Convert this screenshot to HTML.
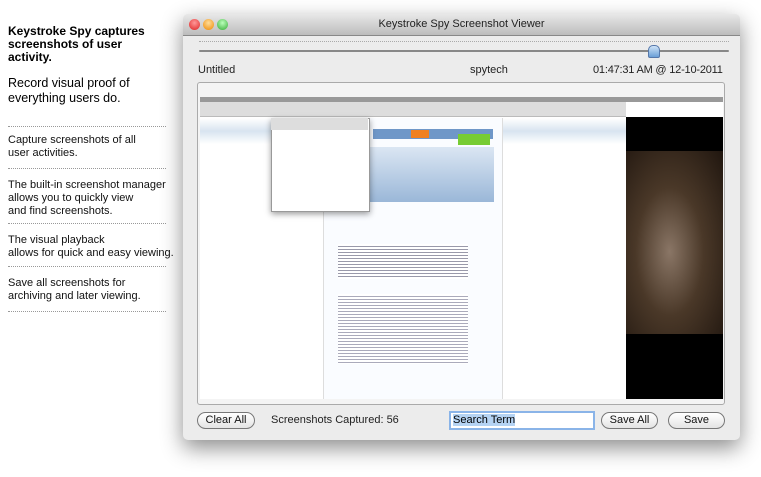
<!DOCTYPE html>
<html><head><meta charset="utf-8"><style>
body{margin:0;width:761px;height:477px;background:#fff;position:relative;overflow:hidden;font-family:"Liberation Sans",sans-serif;}
.a{position:absolute;}
.lt{font-size:11px;color:#111;line-height:13px;left:8px;}
.dot{position:absolute;left:8px;width:158px;border-top:1px dotted #999;}
.win{left:183px;top:14px;width:557px;height:426px;background:#ececec;border-radius:5px;box-shadow:0 8px 22px rgba(0,0,0,.45);overflow:hidden;}
.tb{left:0;top:0;width:557px;height:21px;background:linear-gradient(#e8e8e8,#bcbcbc);border-bottom:1px solid #888;text-align:center;font-size:11px;line-height:21px;color:#222;}
.light{position:absolute;top:5px;width:11px;height:11px;border-radius:50%;}
.btn{position:absolute;top:398px;height:15px;border:1px solid #777;border-radius:9px;background:linear-gradient(#fff,#e4e4e4);font-size:11px;line-height:15px;text-align:center;color:#111;}
</style></head><body>
<div class="a" style="left:8px;top:25px;font-size:12px;font-weight:bold;line-height:13px;color:#000">Keystroke Spy captures<br>screenshots of user<br>activity.</div>
<div class="a" style="left:8px;top:76px;font-size:12.5px;line-height:15px;color:#000">Record visual proof of<br>everything users do.</div>
<div class="dot" style="top:126px"></div>
<div class="a lt" style="top:134px">Capture screenshots of all<br>user activities.</div>
<div class="dot" style="top:168px"></div>
<div class="a lt" style="top:179px">The built-in screenshot manager<br>allows you to quickly view<br>and find screenshots.</div>
<div class="dot" style="top:223px"></div>
<div class="a lt" style="top:234px">The visual playback<br>allows for quick and easy viewing.</div>
<div class="dot" style="top:266px"></div>
<div class="a lt" style="top:277px">Save all screenshots for<br>archiving and later viewing.</div>
<div class="dot" style="top:311px"></div>

<div class="a win">
 <div class="a tb">Keystroke Spy Screenshot Viewer</div>
 <div class="light" style="left:6px;background:radial-gradient(circle at 50% 35%,#f99,#d22)"></div>
 <div class="light" style="left:20px;background:radial-gradient(circle at 50% 35%,#fd9,#e80)"></div>
 <div class="light" style="left:34px;background:radial-gradient(circle at 50% 35%,#bfb,#3a3)"></div>
 <div class="a" style="left:16px;top:27px;width:530px;border-top:1px dotted #aaa"></div>
 <div class="a" style="left:16px;top:36px;width:530px;height:2px;background:#888;border-radius:1px"></div>
 <div class="a" style="left:465px;top:31px;width:10px;height:11px;background:linear-gradient(#cfe3f7,#6a9fd6);border:1px solid #5577aa;border-radius:5px 5px 2px 2px"></div>
 <div class="a" style="left:15px;top:50px;font-size:11px;color:#222">Untitled</div>
 <div class="a" style="left:287px;top:50px;font-size:11px;color:#222">spytech</div>
 <div class="a" style="left:410px;top:50px;font-size:11px;color:#222;letter-spacing:-0.2px">01:47:31 AM @ 12-10-2011</div>
 <div class="a" style="left:14px;top:68px;width:526px;height:321px;background:#f4f4f4;border:1px solid #aaa;border-radius:3px"></div>
 <div class="a" style="left:17px;top:83px;width:523px;height:302px;background:#fff"></div>
 <div class="a" style="left:17px;top:83px;width:523px;height:5px;background:#999"></div>
 <div class="a" style="left:17px;top:88px;width:426px;height:14px;background:#ddd;border-bottom:1px solid #bbb"></div>
 <div class="a" style="left:17px;top:104px;width:426px;height:26px;background:linear-gradient(#fff,#d8e4f0,#fff)"></div>
 <div class="a" style="left:443px;top:103px;width:97px;height:282px;background:#000"></div>
 <div class="a" style="left:443px;top:137px;width:97px;height:183px;background:radial-gradient(ellipse at 45% 55%,#8a7666,#4a3828 45%,#20160f)"></div>
 <div class="a" style="left:140px;top:104px;width:178px;height:281px;background:#fafcff;border-left:1px solid #ddd;border-right:1px solid #ddd"></div>
 <div class="a" style="left:190px;top:115px;width:120px;height:10px;background:#6f97c8"></div>
 <div class="a" style="left:228px;top:116px;width:18px;height:8px;background:#f08020"></div>
 <div class="a" style="left:163px;top:133px;width:148px;height:55px;background:linear-gradient(#dbe6f3,#9ab7d8)"></div>
 <div class="a" style="left:275px;top:120px;width:32px;height:11px;background:#7c3"></div>
 <div class="a" style="left:155px;top:230px;width:130px;height:35px;background:repeating-linear-gradient(#fff 0 2px,#99a 2px 3px)"></div>
 <div class="a" style="left:155px;top:280px;width:130px;height:70px;background:repeating-linear-gradient(#fff 0 2px,#aab 2px 3px)"></div>
 <div class="a" style="left:88px;top:104px;width:97px;height:92px;background:#fff;border:1px solid #999;box-shadow:0 2px 6px rgba(0,0,0,.4)"></div>
 <div class="a" style="left:88px;top:104px;width:97px;height:12px;background:#ddd"></div>
 <div class="btn" style="left:14px;width:56px">Clear All</div>
 <div class="a" style="left:88px;top:400px;font-size:11px;color:#222">Screenshots Captured: 56</div>
 <div class="a" style="left:266px;top:397px;width:140px;height:15px;border:2px solid #8ab4e8;background:#fff;font-size:11px;line-height:15px;color:#000;padding-left:2px"><span style="background:#b5d3f3">Search Term</span></div>
 <div class="btn" style="left:418px;width:55px">Save All</div>
 <div class="btn" style="left:485px;width:55px">Save</div>
</div>
</body></html>
